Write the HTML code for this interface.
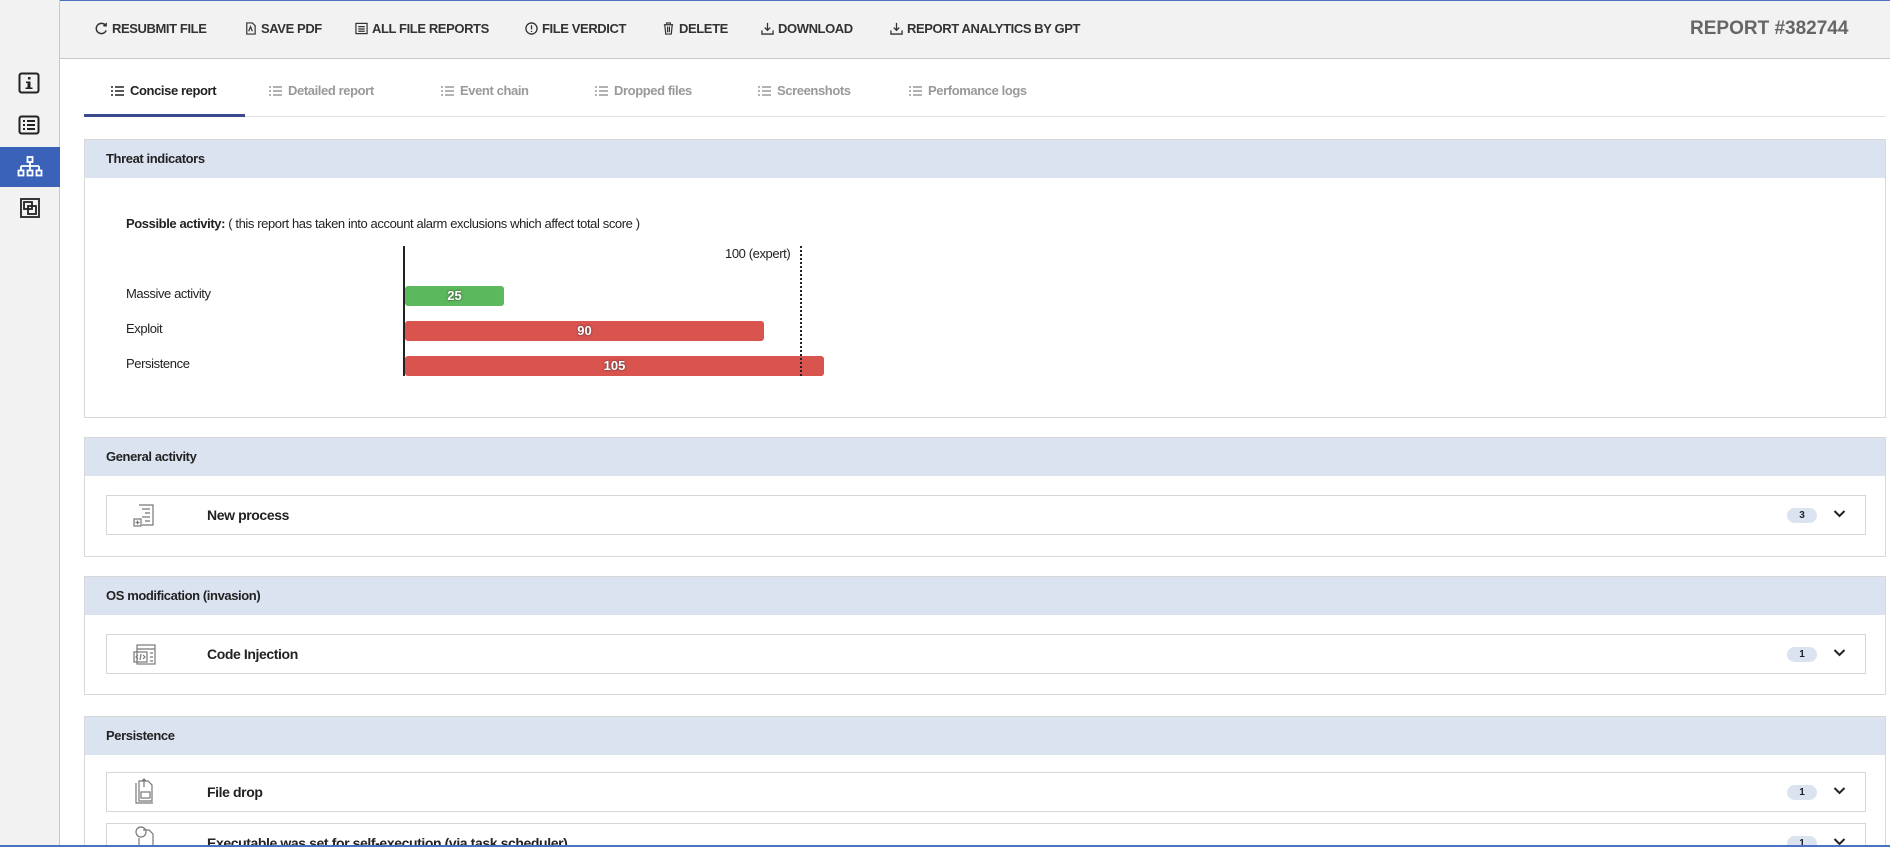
<!DOCTYPE html>
<html><head><meta charset="utf-8"><style>
*{box-sizing:border-box;margin:0;padding:0}
html{width:1890px;height:847px;overflow:hidden}
body{width:1890px;height:847px;overflow:hidden;background:#fff;font-family:"Liberation Sans",sans-serif;color:#222;position:relative}
.abs{position:absolute}
#top{left:0;top:0;width:1890px;height:59px;background:#f2f2f2;border-top:1px solid #4a72c0;border-bottom:1px solid #c8c8c8}
#side{left:0;top:0;width:60px;height:847px;background:#f2f2f2;border-right:1px solid #c8c8c8}
.tb{position:absolute;top:21px;font-size:13px;font-weight:bold;color:#333;white-space:nowrap;letter-spacing:-0.4px;display:flex;align-items:center;gap:4px}
.tb svg{width:13px;height:13px}
.tab{position:absolute;top:83px;font-size:13px;font-weight:bold;color:#999;white-space:nowrap;letter-spacing:-0.4px;display:flex;align-items:center;gap:5px}
.tab.on{color:#222}
.panel{position:absolute;left:84px;width:1802px;border:1px solid #d8d8d8;background:#fff;overflow:hidden}
.ph{background:#dce3f0;height:38px;padding-left:21px;font-size:13px;font-weight:bold;line-height:37px;letter-spacing:-0.4px}
.item{position:absolute;left:21px;width:1760px;height:40px;border:1px solid #d6d6d6;background:#fff}
.item .t{position:absolute;left:100px;top:11px;font-size:14px;font-weight:bold;letter-spacing:-0.4px;white-space:nowrap}
.item .ic{position:absolute;left:26px;top:8px}
.badge{position:absolute;left:1680px;top:12px;width:30px;height:15px;border-radius:8px;background:#dce3f0;font-size:10px;font-weight:bold;text-align:center;line-height:15px}
.chev{position:absolute;left:1726px;top:13px}
.lbl{position:absolute;font-size:13px;letter-spacing:-0.4px;white-space:nowrap}
.bar{position:absolute;left:405px;height:20px;border-radius:3px;color:#fff;font-weight:bold;font-size:13px;text-align:center;line-height:20px;text-shadow:0 0 2px #333}
</style></head><body>
<div id="top" class="abs"></div>
<div id="side" class="abs"></div>
<svg class="abs" style="left:18px;top:72px" width="22" height="22" viewBox="0 0 22 22"><rect x="1.5" y="1.5" width="19" height="19" rx="2" fill="none" stroke="#222" stroke-width="2"/><rect x="10" y="5" width="2.5" height="2.5" fill="#222"/><path d="M8 9.5h4.5v6h2v1.5h-7v-1.5h2v-4.5h-1.5z" fill="#222"/></svg>
<svg class="abs" style="left:18px;top:115px" width="22" height="20" viewBox="0 0 22 20"><rect x="1.5" y="1.5" width="19" height="17" rx="2" fill="none" stroke="#222" stroke-width="2"/><path d="M5 6h2M5 10h2M5 14h2M9 6h8M9 10h8M9 14h8" stroke="#222" stroke-width="2"/></svg>
<div class="abs" style="left:0;top:147px;width:60px;height:40px;background:#3a62b8"></div>
<svg class="abs" style="left:17px;top:156px" width="26" height="22" viewBox="0 0 26 22" fill="none" stroke="#fff" stroke-width="1.8"><rect x="10.5" y="1" width="5" height="5"/><path d="M13 6v4M4 10h18M4 10v4M13 10v4M22 10v4"/><rect x="1.5" y="14.5" width="5" height="5"/><rect x="10.5" y="14.5" width="5" height="5"/><rect x="19.5" y="14.5" width="5" height="5"/></svg>
<svg class="abs" style="left:19px;top:197px" width="22" height="22" viewBox="0 0 22 22" fill="none" stroke="#222" stroke-width="1.8"><rect x="2" y="2" width="18" height="18"/><rect x="5" y="5" width="8" height="7"/><rect x="9" y="9" width="8" height="8"/></svg>
<div class="tb" style="left:95px"><svg viewBox="0 0 14 14" fill="none" stroke="#333" stroke-width="1.6"><path d="M11.5 4A5.5 5.5 0 1 0 12 9"/><path d="M9 4h3V1"/></svg>RESUBMIT FILE</div>
<div class="tb" style="left:244px"><svg viewBox="0 0 14 14" fill="none" stroke="#333" stroke-width="1.3"><path d="M3 1h6l3 3v9H3z"/><path d="M5 10l2-5 2 5"/></svg>SAVE PDF</div>
<div class="tb" style="left:355px"><svg viewBox="0 0 14 14" fill="none" stroke="#333" stroke-width="1.3"><rect x="1" y="1.5" width="12" height="11"/><path d="M3.5 5h7M3.5 7.5h7M3.5 10h7"/></svg>ALL FILE REPORTS</div>
<div class="tb" style="left:525px"><svg viewBox="0 0 14 14" fill="none" stroke="#333" stroke-width="1.4"><circle cx="7" cy="7" r="6"/><path d="M7 3.5v4.5M7 9.5v1.3"/></svg>FILE VERDICT</div>
<div class="tb" style="left:662px"><svg viewBox="0 0 14 14" fill="none" stroke="#333" stroke-width="1.3"><path d="M2 3h10M5 3V1h4v2M3 3l1 10h6l1-10M6 5v6M8 5v6"/></svg>DELETE</div>
<div class="tb" style="left:761px"><svg viewBox="0 0 14 14" fill="none" stroke="#333" stroke-width="1.4"><path d="M7 1v8M4 6l3 3 3-3M1 9v4h12V9"/></svg>DOWNLOAD</div>
<div class="tb" style="left:890px"><svg viewBox="0 0 14 14" fill="none" stroke="#333" stroke-width="1.4"><path d="M7 1v8M4 6l3 3 3-3M1 9v4h12V9"/></svg>REPORT ANALYTICS BY GPT</div>
<div class="abs" style="left:1690px;top:18px;font-size:19px;font-weight:bold;color:#666;letter-spacing:0">REPORT #382744</div>
<svg width="0" height="0" style="position:absolute"><defs><g id="li"><path d="M1 2h2M1 6h2M1 10h2M5 2h9M5 6h9M5 10h9" stroke-width="1.6"/></g></defs></svg>
<div class="tab on" style="left:110px"><svg width="15" height="12" stroke="#222"><use href="#li"/></svg>Concise report</div>
<div class="tab" style="left:268px"><svg width="15" height="12" stroke="#999"><use href="#li"/></svg>Detailed report</div>
<div class="tab" style="left:440px"><svg width="15" height="12" stroke="#999"><use href="#li"/></svg>Event chain</div>
<div class="tab" style="left:594px"><svg width="15" height="12" stroke="#999"><use href="#li"/></svg>Dropped files</div>
<div class="tab" style="left:757px"><svg width="15" height="12" stroke="#999"><use href="#li"/></svg>Screenshots</div>
<div class="tab" style="left:908px"><svg width="15" height="12" stroke="#999"><use href="#li"/></svg>Perfomance logs</div>
<div class="abs" style="left:84px;top:116px;width:1802px;height:1px;background:#e2e2e2"></div>
<div class="abs" style="left:84px;top:114px;width:161px;height:3px;background:#3a4a8a"></div>
<div class="panel" style="top:139px;height:279px"><div class="ph">Threat indicators</div></div>
<div class="lbl" style="left:126px;top:216px"><b>Possible activity:</b> ( this report has taken into account alarm exclusions which affect total score )</div>
<div class="abs" style="left:403px;top:246px;width:2px;height:130px;background:#222"></div>
<div class="lbl" style="left:725px;top:246px">100 (expert)</div>
<div class="lbl" style="left:126px;top:286px">Massive activity</div>
<div class="lbl" style="left:126px;top:321px">Exploit</div>
<div class="lbl" style="left:126px;top:356px">Persistence</div>
<div class="bar" style="top:286px;width:99px;background:#5cb85c">25</div>
<div class="bar" style="top:321px;width:359px;background:#d9534f">90</div>
<div class="bar" style="top:356px;width:419px;background:#d9534f">105</div>
<div class="abs" style="left:800px;top:246px;height:130px;border-left:2px dotted #222"></div>
<div class="panel" style="top:437px;height:120px"><div class="ph">General activity</div>
<div class="item" style="top:57px"><svg class="ic" width="26" height="24" viewBox="0 0 26 24" fill="none" stroke="#777" stroke-width="1.2"><path d="M6 1h14v20H9"/><path d="M9 5h8M12 9h5M9 13h8M12 17h5"/><rect x="1" y="15" width="7" height="7"/><path d="M4.5 16.5v4M2.5 18.5h4"/></svg><div class="t">New process</div><div class="badge">3</div><svg class="chev" width="13" height="9" viewBox="0 0 13 9"><path d="M1.5 2l5 5 5-5" fill="none" stroke="#222" stroke-width="2"/></svg></div></div>
<div class="panel" style="top:576px;height:119px"><div class="ph">OS modification (invasion)</div>
<div class="item" style="top:57px"><svg class="ic" width="26" height="24" viewBox="0 0 26 24" fill="none" stroke="#777" stroke-width="1.2"><rect x="4" y="2" width="18" height="19"/><path d="M4 6h18M17 10h3M17 14h3M17 18h3"/><rect x="1" y="9" width="13" height="10"/><path d="M5 12l-2 2 2 2M10 12l2 2-2 2M8 11l-1 6"/></svg><div class="t">Code Injection</div><div class="badge">1</div><svg class="chev" width="13" height="9" viewBox="0 0 13 9"><path d="M1.5 2l5 5 5-5" fill="none" stroke="#222" stroke-width="2"/></svg></div></div>
<div class="panel" style="top:716px;height:131px;border-bottom:none"><div class="ph">Persistence</div>
<div class="item" style="top:55px"><svg class="ic" width="26" height="28" viewBox="0 0 26 28" fill="none" stroke="#777" stroke-width="1.2" style="top:4px"><path d="M3 6v20h17"/><path d="M6 4h9l4 4v16H6z"/><path d="M11 10V2M9 4l2-2 2 2"/><rect x="8" y="15" width="9" height="6"/></svg><div class="t">File drop</div><div class="badge">1</div><svg class="chev" width="13" height="9" viewBox="0 0 13 9"><path d="M1.5 2l5 5 5-5" fill="none" stroke="#222" stroke-width="2"/></svg></div>
<div class="item" style="top:106px"><svg class="ic" width="26" height="28" viewBox="0 0 26 28" fill="none" stroke="#777" stroke-width="1.2" style="top:2px"><circle cx="8" cy="6" r="5"/><path d="M10 4h6l4 4v16H6V12"/></svg><div class="t">Executable was set for self-execution (via task scheduler)</div><div class="badge">1</div><svg class="chev" width="13" height="9" viewBox="0 0 13 9"><path d="M1.5 2l5 5 5-5" fill="none" stroke="#222" stroke-width="2"/></svg></div></div>
<div class="abs" style="left:0;top:845px;width:1890px;height:2px;background:#4a72c0"></div>
</body></html>
